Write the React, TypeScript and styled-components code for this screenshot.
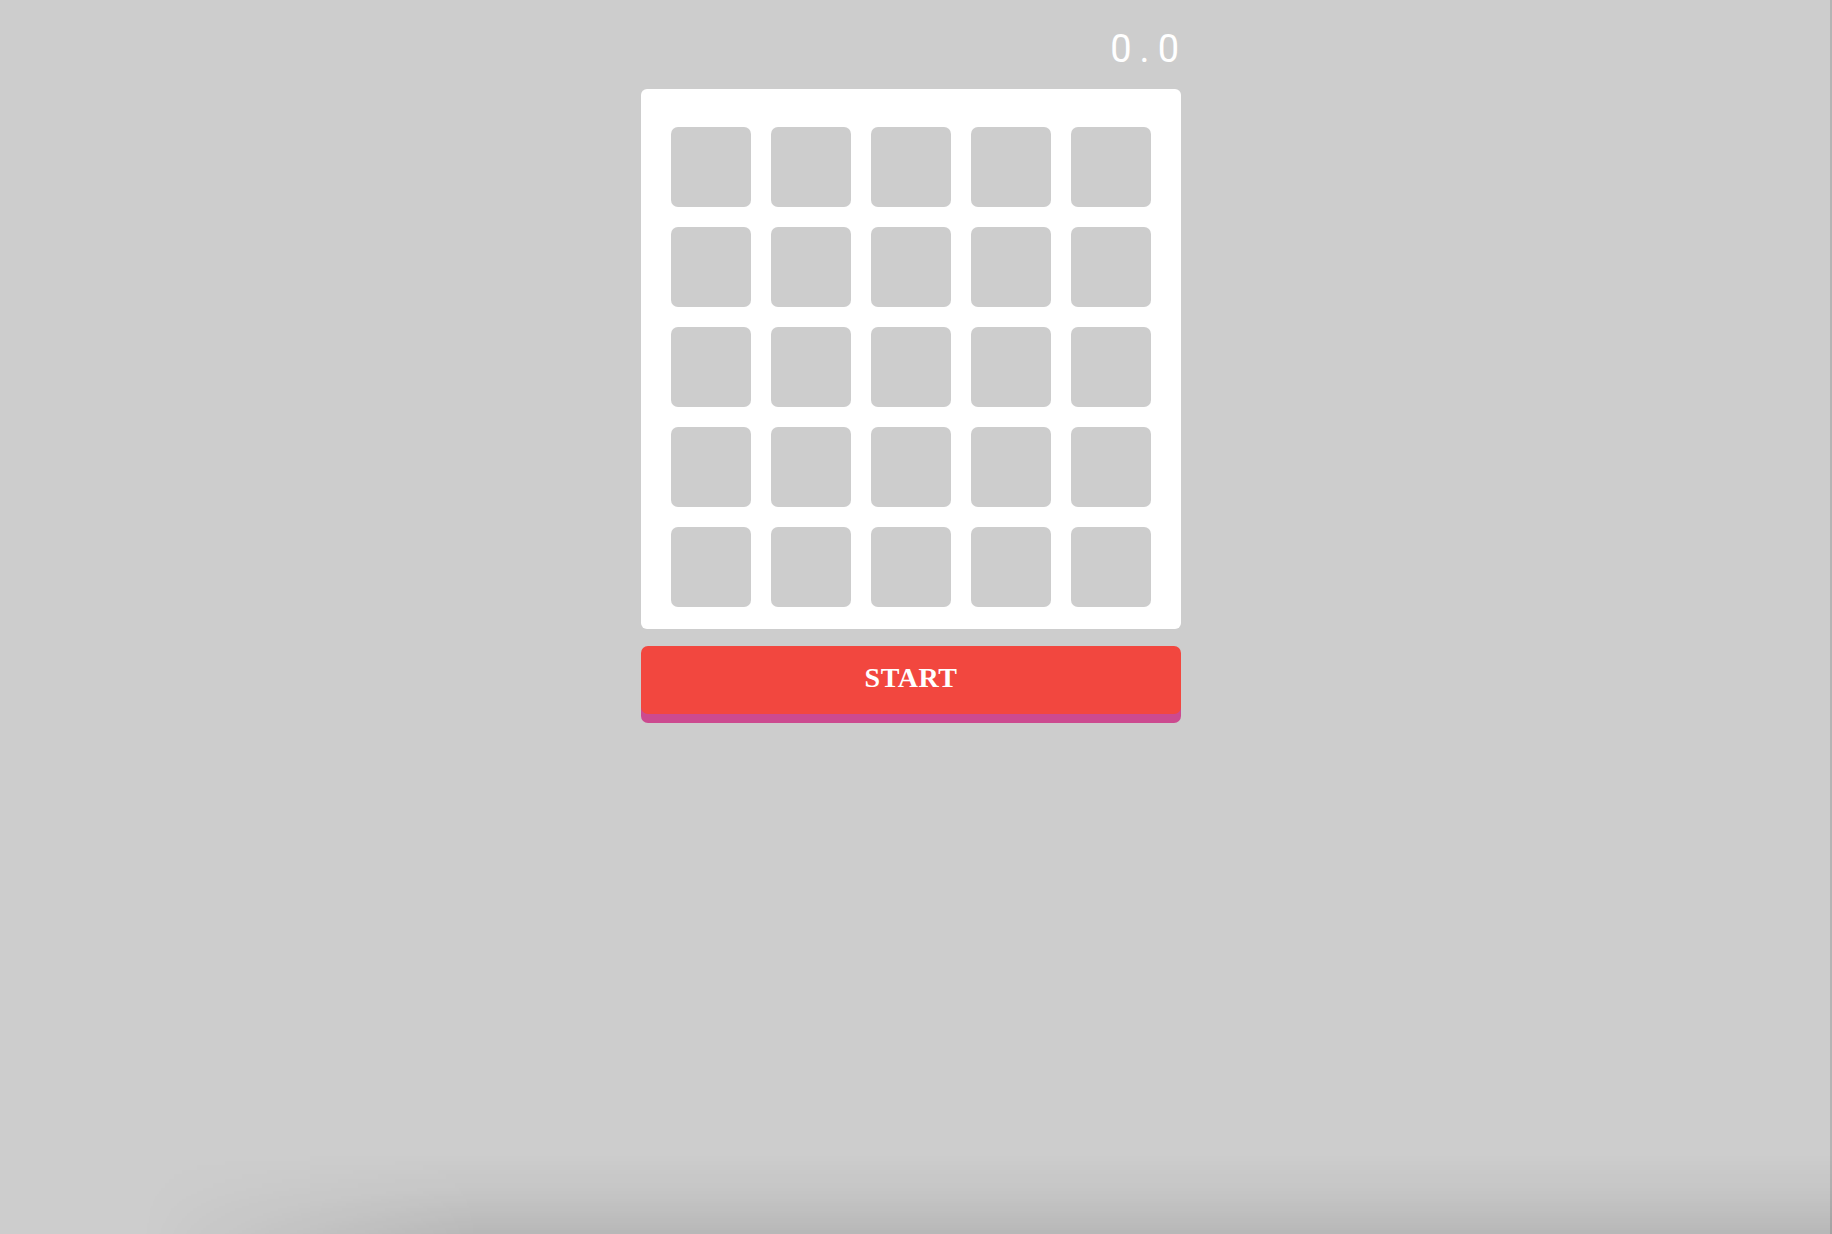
import React from "react";
import styled, { createGlobalStyle } from "styled-components";

const GlobalStyle = createGlobalStyle`
  html, body {
    margin: 0;
    padding: 0;
    height: 100%;
    background: #cdcdcd;
  }
  body {
    font-family: "Liberation Sans", Arial, sans-serif;
    overflow: hidden;
  }
  body::after {
    content: "";
    position: fixed;
    left: 0;
    right: 0;
    bottom: 0;
    height: 80px;
    pointer-events: none;
    background: linear-gradient(to bottom, rgba(0,0,0,0) 0%, rgba(0,0,0,0.03) 45%, rgba(0,0,0,0.1) 100%);
    -webkit-mask-image: linear-gradient(to right, transparent 140px, #000 480px);
    mask-image: linear-gradient(to right, transparent 140px, #000 480px);
  }
  body::before {
    content: "";
    position: fixed;
    top: 0;
    bottom: 0;
    right: 0;
    width: 2px;
    background: #b4b4b4;
    pointer-events: none;
  }
`;

const Page = styled.main`
  display: flex;
  flex-direction: column;
  align-items: center;
  padding-right: 10px;
`;

const Game = styled.section`
  width: 540px;
  display: flex;
  flex-direction: column;
`;

const Timer = styled.div`
  align-self: flex-end;
  color: #ffffff;
  font-family: Roboto, "Liberation Sans", sans-serif;
  font-size: 38px;
  line-height: 38px;
  height: 38px;
  margin-top: 30px;
  margin-bottom: 21px;
  margin-right: -6px;
  letter-spacing: 8px;
`;

const Board = styled.div`
  background: #ffffff;
  border-radius: 6px;
  padding: 38px 30px 22px;
  display: grid;
  grid-template-columns: repeat(5, 80px);
  grid-auto-rows: 80px;
  gap: 20px;
`;

const Cell = styled.div`
  background: #cdcdcd;
  border-radius: 7px;
`;

const StartButton = styled.button`
  margin-top: 17px;
  height: 68px;
  width: 100%;
  border: none;
  border-radius: 7px;
  background: #f2473f;
  box-shadow: 0 9px 0 #cc4a8f;
  color: #ffffff;
  font-family: "Liberation Serif", "Times New Roman", serif;
  font-weight: bold;
  font-size: 28px;
  letter-spacing: 0.5px;
  padding: 0 0 4px;
  cursor: pointer;
`;

export default function App() {
  const cells = Array.from({ length: 25 }, (_, i) => i);
  return (
    <Page>
      <GlobalStyle />
      <Game>
        <Timer>0.0</Timer>
        <Board>
          {cells.map((i) => (
            <Cell key={i} />
          ))}
        </Board>
        <StartButton>START</StartButton>
      </Game>
    </Page>
  );
}
